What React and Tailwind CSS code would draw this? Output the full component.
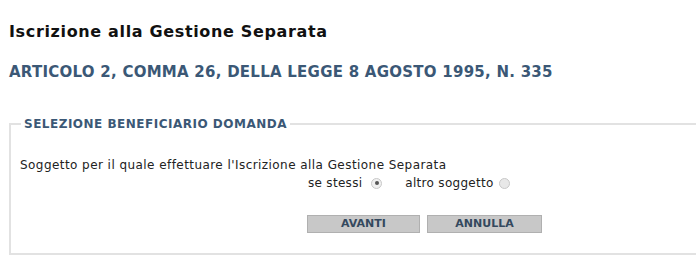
export default function App() {
  const font = { fontFamily: '"DejaVu Sans", Verdana, sans-serif' };
  return (
    <div className="w-[696px] h-[271px] overflow-hidden bg-white" style={font}>
      <div className="pl-[9px] pt-[21px]">
        <h1 className="text-[16px] leading-[22px] font-bold tracking-[0.65px] text-[#111]">Iscrizione alla Gestione Separata</h1>
        <h2 className="mt-[18px] text-[15px] leading-[22px] font-bold tracking-[0.25px] text-[#3b5876]">
          ARTICOLO 2, COMMA 26, DELLA LEGGE 8 AGOSTO 1995, N. 335
        </h2>
        <fieldset className="mt-[34px] w-[700px] border-2 border-r-0 border-[#e2e2e2] pl-[9px] pb-[20px]">
          <legend className="ml-[1px] px-[3px] text-[12px] leading-[14px] font-bold tracking-[0.5px] text-[#3b5876]">
            SELEZIONE BENEFICIARIO DOMANDA
          </legend>
          <p className="mt-[26px] text-[12px] leading-[16px] tracking-[0.44px] text-[#222]">
            Soggetto per il quale effettuare l'Iscrizione alla Gestione Separata
          </p>
          <div className="mt-[2px] ml-[288px] flex items-center text-[12px] leading-[16px] tracking-[0.3px] text-[#222]">
            <span>se stessi</span>
            <span className="ml-[9px] w-[11px] h-[11px] rounded-full border border-[#c8c8c8] bg-[#f0f0f0] flex items-center justify-center">
              <span className="w-[4px] h-[4px] rounded-full bg-[#555]" />
            </span>
            <span className="ml-[23px]">altro soggetto</span>
            <span className="ml-[5px] w-[11px] h-[11px] rounded-full border border-[#c8c8c8] bg-[#e8e8e8]" />
          </div>
          <div className="mt-[24px] ml-[287px] flex gap-[7px]">
            <button className="w-[113px] h-[18px] bg-[#c8c8c8] border border-[#b0b0b0] text-[11px] font-bold text-[#34495e] leading-[16px]">
              AVANTI
            </button>
            <button className="w-[115px] h-[18px] bg-[#c8c8c8] border border-[#b0b0b0] text-[11px] font-bold text-[#34495e] leading-[16px]">
              ANNULLA
            </button>
          </div>
        </fieldset>
      </div>
    </div>
  );
}
